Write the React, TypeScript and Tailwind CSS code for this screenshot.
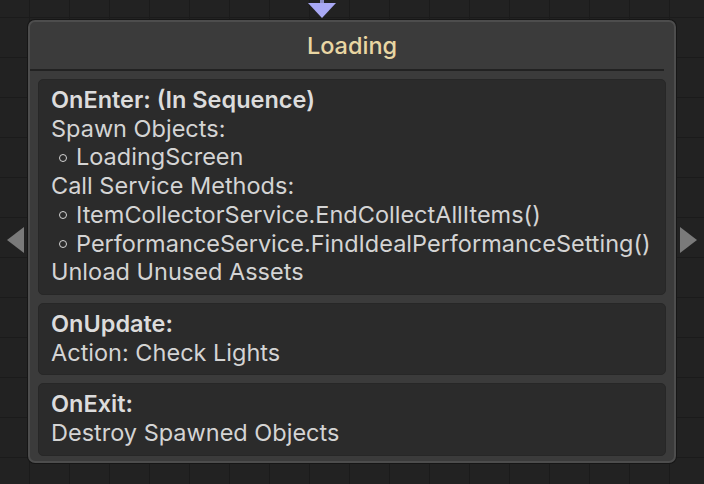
import React from 'react';

interface Section {
  title: string;
  lines: { text: string; bullet?: boolean }[];
}

const sections: Section[] = [
  {
    title: 'OnEnter: (In Sequence)',
    lines: [
      { text: 'Spawn Objects:' },
      { text: 'LoadingScreen', bullet: true },
      { text: 'Call Service Methods:' },
      { text: 'ItemCollectorService.EndCollectAllItems()', bullet: true },
      { text: 'PerformanceService.FindIdealPerformanceSetting()', bullet: true },
      { text: 'Unload Unused Assets' },
    ],
  },
  {
    title: 'OnUpdate:',
    lines: [{ text: 'Action: Check Lights' }],
  },
  {
    title: 'OnExit:',
    lines: [{ text: 'Destroy Spawned Objects' }],
  },
];

const SideArrow = ({ dir }: { dir: 'left' | 'right' }) => (
  <svg width="18" height="26" viewBox="0 0 18 26" className="shrink-0">
    {dir === 'left' ? (
      <polygon points="17,0 17,26 0,13" fill="#7a7a7a" />
    ) : (
      <polygon points="1,0 1,26 18,13" fill="#7a7a7a" />
    )}
  </svg>
);

export default function App() {
  return (
    <div
      className="relative w-[704px] h-[484px] overflow-hidden bg-[#222222]"
      style={{
        backgroundImage:
          'linear-gradient(to right, #1b1b1b 1px, transparent 1px), linear-gradient(to bottom, #1b1b1b 1px, transparent 1px)',
        backgroundSize: '40px 40px',
        backgroundPosition: '29px 17px',
        fontFamily: 'Inter, "Noto Sans", sans-serif',
      }}
    >
      {/* top input arrow */}
      <svg width="28" height="19" viewBox="0 0 28 19" className="absolute left-[308px] top-0">
        <rect x="12" y="0" width="4" height="4" fill="#8c8cc8" />
        <polygon points="0,3 28,3 14,18" fill="#a9a9f5" />
      </svg>

      <div className="flex items-start pt-[20px] px-[7px] gap-[3px]">
        <div className="h-[440px] flex items-center">
          <SideArrow dir="left" />
        </div>
        <div className="flex-1 rounded-[7px] border-2 border-[#4d4d4d] bg-[#3b3b3b] shadow-[0_0_0_1px_#161616] flex flex-col px-[8px] pb-[5px]">
          <div className="h-[49px] flex items-center justify-center border-b-2 border-[#222222] ml-[-8px] mr-[2px] pl-[10px]">
            <span className="text-[23.5px] font-medium text-[#e9d6a3]">Loading</span>
          </div>
          <div className="flex flex-col gap-[8px] pt-[8px]">
            {sections.map((s) => (
              <div
                key={s.title}
                className="rounded-[5px] bg-[#2b2b2b] border border-[#272727] px-[12px] pt-[6px] pb-[7px] text-[23.5px] leading-[28.7px] text-[#d4d4d4]"
              >
                <div className="font-semibold text-[#dcdcdc]">{s.title}</div>
                {s.lines.map((l) => (
                  <div key={l.text} className="flex items-center">
                    {l.bullet && (
                      <span className="inline-flex items-center w-[25px] pl-[8px]">
                        <span className="inline-block w-[8px] h-[8px] rounded-full border-[1.5px] border-[#d4d4d4]" />
                      </span>
                    )}
                    <span>{l.text}</span>
                  </div>
                ))}
              </div>
            ))}
          </div>
        </div>
        <div className="h-[440px] flex items-center">
          <SideArrow dir="right" />
        </div>
      </div>
    </div>
  );
}
